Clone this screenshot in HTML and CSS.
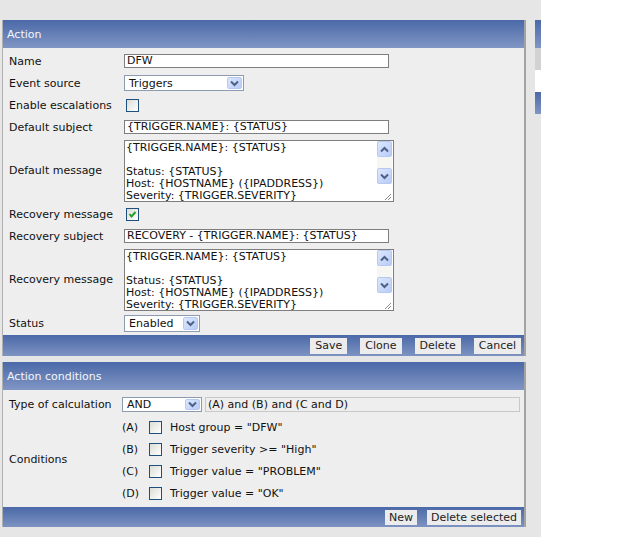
FILE: index.html
```html
<!DOCTYPE html>
<html>
<head>
<meta charset="utf-8">
<link rel="stylesheet" href="styles.css">
</head>
<body>
<div class="page">
  <div class="main">
    <div class="panel">
      <div class="hdr">Action</div>
      <div class="form">
        <div class="lbl">Name</div>
        <div class="val"><div class="input w265">DFW</div></div>

        <div class="lbl">Event source</div>
        <div class="val"><div class="select w120 h16"><span class="stext">Triggers</span><span class="arr"><svg width="11" height="7" viewBox="0 0 11 7"><path d="M2 1.5 L5.5 5 L9 1.5" stroke="#4d6185" stroke-width="2" fill="none"/></svg></span></div></div>

        <div class="lbl">Enable escalations</div>
        <div class="val"><span class="cb ml2"></span></div>

        <div class="lbl">Default subject</div>
        <div class="val"><div class="input w265">{TRIGGER.NAME}: {STATUS}</div></div>

        <div class="lbl">Default message</div>
        <div class="val">
          <div class="ta">
            <div class="ta-text">{TRIGGER.NAME}: {STATUS}

Status: {STATUS}
Host: {HOSTNAME} ({IPADDRESS})
Severity: {TRIGGER.SEVERITY}</div>
            <div class="sb">
              <span class="sbtn"><svg width="11" height="7" viewBox="0 0 11 7"><path d="M2 5.5 L5.5 2 L9 5.5" stroke="#4d6185" stroke-width="2" fill="none"/></svg></span>
              <span class="track"></span>
              <span class="sbtn"><svg width="11" height="7" viewBox="0 0 11 7"><path d="M2 1.5 L5.5 5 L9 1.5" stroke="#4d6185" stroke-width="2" fill="none"/></svg></span>
              <span class="grip"><svg width="9" height="9" viewBox="0 0 9 9"><path d="M8 2 L2 8 M8 5 L5 8" stroke="#8a8a8a" stroke-width="1" fill="none"/></svg></span>
            </div>
          </div>
        </div>

        <div class="lbl">Recovery message</div>
        <div class="val"><span class="cb ml2 checked"><svg width="11" height="11" viewBox="0 0 11 11"><path d="M2.5 5 L4.5 7.5 L8.5 3" stroke="#21a121" stroke-width="2" fill="none"/></svg></span></div>

        <div class="lbl">Recovery subject</div>
        <div class="val"><div class="input w265">RECOVERY - {TRIGGER.NAME}: {STATUS}</div></div>

        <div class="lbl">Recovery message</div>
        <div class="val">
          <div class="ta">
            <div class="ta-text">{TRIGGER.NAME}: {STATUS}

Status: {STATUS}
Host: {HOSTNAME} ({IPADDRESS})
Severity: {TRIGGER.SEVERITY}</div>
            <div class="sb">
              <span class="sbtn"><svg width="11" height="7" viewBox="0 0 11 7"><path d="M2 5.5 L5.5 2 L9 5.5" stroke="#4d6185" stroke-width="2" fill="none"/></svg></span>
              <span class="track"></span>
              <span class="sbtn"><svg width="11" height="7" viewBox="0 0 11 7"><path d="M2 1.5 L5.5 5 L9 1.5" stroke="#4d6185" stroke-width="2" fill="none"/></svg></span>
              <span class="grip"><svg width="9" height="9" viewBox="0 0 9 9"><path d="M8 2 L2 8 M8 5 L5 8" stroke="#8a8a8a" stroke-width="1" fill="none"/></svg></span>
            </div>
          </div>
        </div>

        <div class="lbl">Status</div>
        <div class="val"><div class="select w76 h17"><span class="stext">Enabled</span><span class="arr"><svg width="11" height="7" viewBox="0 0 11 7"><path d="M2 1.5 L5.5 5 L9 1.5" stroke="#4d6185" stroke-width="2" fill="none"/></svg></span></div></div>
      </div>
      <div class="bar bar1">
        <span class="btn">Save</span>
        <span class="btn">Clone</span>
        <span class="btn">Delete</span>
        <span class="btn">Cancel</span>
      </div>
    </div>

    <div class="panel">
      <div class="hdr">Action conditions</div>
      <div class="form form2">
        <div class="lbl">Type of calculation</div>
        <div class="val calc">
          <div class="select w80 h15"><span class="stext">AND</span><span class="arr"><svg width="11" height="7" viewBox="0 0 11 7"><path d="M2 1.5 L5.5 5 L9 1.5" stroke="#4d6185" stroke-width="2" fill="none"/></svg></span></div>
          <div class="formula">(A) and (B) and (C and D)</div>
        </div>

        <div class="lbl">Conditions</div>
        <div class="val conds">
          <div class="cond"><span class="tag">(A)</span><span class="cb"></span><span>Host group = "DFW"</span></div>
          <div class="cond"><span class="tag">(B)</span><span class="cb"></span><span>Trigger severity &gt;= "High"</span></div>
          <div class="cond"><span class="tag">(C)</span><span class="cb"></span><span>Trigger value = "PROBLEM"</span></div>
          <div class="cond"><span class="tag">(D)</span><span class="cb"></span><span>Trigger value = "OK"</span></div>
        </div>
      </div>
      <div class="bar bar2">
        <span class="btn">New</span>
        <span class="btn">Delete selected</span>
      </div>
    </div>
  </div>

  <div class="side">
    <div class="s-blue s1"></div>
    <div class="s-gray"></div>
    <div class="s-white"></div>
    <div class="s-blue s2"></div>
  </div>
</div>
</body>
</html>
```

FILE: styles.css
```css
html, body {
  margin: 0;
  padding: 0;
  background: #ffffff;
}

body {
  font-family: "DejaVu Sans", Verdana, sans-serif;
  font-size: 11px;
  color: #111;
}

.page {
  width: 541px;
  height: 537px;
  box-sizing: border-box;
  padding-top: 20px;
  background: #e6e6e6;
  display: flex;
  align-items: flex-start;
  overflow: hidden;
}

.main {
  margin-left: 2px;
  width: 524px;
  display: flex;
  flex-direction: column;
  gap: 6px;
}

.panel {
  background: #eeeeee;
  border-left: 1px solid #b0b0b0;
  border-right: 2px solid #a2a2a2;
}

.hdr {
  height: 28px;
  line-height: 30px;
  overflow: hidden;
  padding-left: 4px;
  color: #f4f6fa;
  background: linear-gradient(#4b69a8, #8096c4);
}

.form {
  display: grid;
  grid-template-columns: 115px 1fr;
  grid-auto-rows: minmax(22px, auto);
  align-items: center;
  padding: 2px 0 1px 6px;
}

.form2 {
  grid-template-columns: 113px 1fr;
  padding: 3px 0 3px 6px;
}

.lbl {
  white-space: nowrap;
}

.val {
  display: flex;
  align-items: center;
}

.input {
  box-sizing: border-box;
  height: 14px;
  line-height: 12px;
  border: 1px solid #7e7e7e;
  background: #fff;
  padding-left: 2px;
  white-space: nowrap;
  overflow: hidden;
}

.w265 { width: 265px; }
.w120 { width: 120px; }
.w76 { width: 76px; }
.w80 { width: 80px; }
.h15 { height: 15px; }
.h16 { height: 16px; }
.h17 { height: 17px; }

.select {
  box-sizing: border-box;
  border: 1px solid #8c9bb0;
  background: #fff;
  display: flex;
  align-items: stretch;
  padding: 1px;
}

.stext {
  flex: 1;
  padding-left: 3px;
  display: flex;
  align-items: center;
  white-space: nowrap;
}

.arr, .sbtn {
  box-sizing: border-box;
  width: 15px;
  display: flex;
  align-items: center;
  justify-content: center;
  border: 1px solid #b7c9f2;
  border-radius: 2px;
  background: linear-gradient(135deg, #dde7fe, #b8cbf7);
}

.ml2 { margin-left: 2px; }

.cb {
  box-sizing: border-box;
  width: 13px;
  height: 13px;
  border: 1px solid #1f4f7c;
  background: linear-gradient(135deg, #dcdcd6, #ffffff);
  display: inline-flex;
  align-items: center;
  justify-content: center;
}

.ta {
  box-sizing: border-box;
  width: 270px;
  height: 62px;
  margin: 2px 0 1px;
  border: 1px solid #7e7e7e;
  background: #fff;
  display: flex;
}

.ta-text {
  flex: 1;
  padding: 1px 0 0 1px;
  line-height: 12px;
  white-space: pre;
  overflow: hidden;
}

.sb {
  width: 15px;
  margin-right: 1px;
  display: flex;
  flex-direction: column;
  background: #f6f6f2;
}

.sb .sbtn {
  height: 16px;
  flex: none;
}

.sb .track {
  height: 11px;
  flex: none;
}

.sb .grip {
  flex: 1;
  display: flex;
  align-items: flex-end;
  justify-content: flex-end;
  background: #fff;
}

.bar {
  display: flex;
  justify-content: flex-end;
  align-items: center;
  gap: 13px;
  padding-right: 3px;
  background: linear-gradient(#4b69a8, #7d93c2);
}

.bar1 { height: 21px; }
.bar2 { height: 20px; gap: 10px; }

.btn {
  box-sizing: border-box;
  height: 16px;
  line-height: 16px;
  padding: 0 5px;
  background: #ececec;
  color: #222;
}

.bar2 .btn {
  height: 15px;
  line-height: 15px;
  padding: 0 4px;
}

.calc {
  gap: 3px;
}

.formula {
  box-sizing: border-box;
  width: 315px;
  height: 15px;
  line-height: 13px;
  border: 1px solid #c8c8c8;
  padding-left: 2px;
  white-space: nowrap;
}

.conds {
  flex-direction: column;
  align-items: stretch;
  padding-top: 1px;
}

.cond {
  height: 22px;
  display: flex;
  align-items: center;
}

.tag {
  width: 27px;
}

.cond .cb {
  margin-right: 8px;
}

.side {
  margin-left: 9px;
  width: 6px;
  display: flex;
  flex-direction: column;
}

.s-blue {
  background: linear-gradient(#4b69a8, #8096c4);
}

.s1 { height: 28px; }
.s2 { height: 22px; }

.s-gray {
  height: 22px;
  background: #d2d2d2;
}

.s-white {
  height: 22px;
  background: #ffffff;
}
```
